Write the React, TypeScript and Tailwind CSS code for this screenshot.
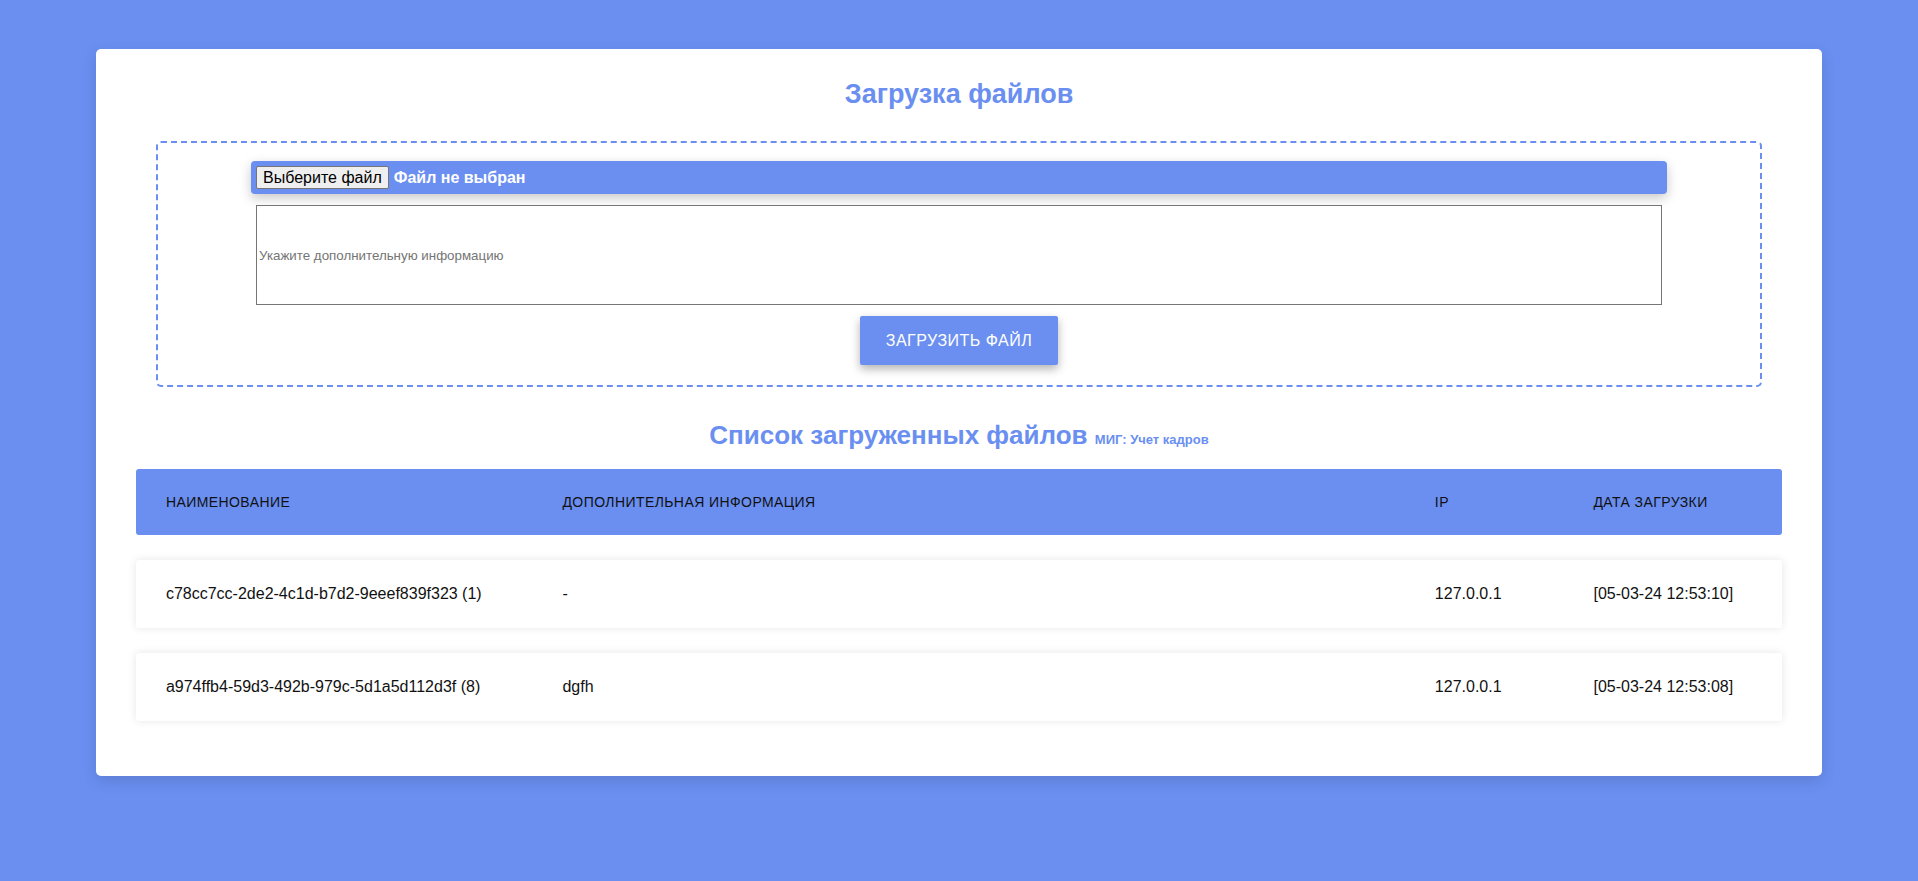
import React from "react";

const rows = [
  { name: "c78cc7cc-2de2-4c1d-b7d2-9eeef839f323 (1)", info: "-", ip: "127.0.0.1", date: "[05-03-24 12:53:10]" },
  { name: "a974ffb4-59d3-492b-979c-5d1a5d112d3f (8)", info: "dgfh", ip: "127.0.0.1", date: "[05-03-24 12:53:08]" },
];

export default function App() {
  return (
    <div className="min-h-screen bg-[#6a8ff1] pt-[49px] pb-10 font-['Liberation_Sans',Arial,sans-serif]">
      <div className="mx-auto w-[90%] rounded-[5px] bg-white px-10 pt-[30px] pb-[30px] shadow-[0_5px_15px_rgba(0,0,0,0.12)]">
        <h1 className="text-center text-[27px] font-bold leading-[31px] text-[#6a8ff1]">Загрузка файлов</h1>

        <div className="mx-5 mt-[31px] flex flex-col items-center gap-[11px] rounded-[5px] border-2 border-dashed border-[#6a8ff1] px-5 pt-[18px] pb-5">
          <div className="box-content flex w-[90%] items-center gap-[5px] rounded-[4px] bg-[#6a8ff1] p-[5px] shadow-[0_4px_12px_rgba(0,0,0,0.22)]">
            <span className="rounded-[2px] border border-[#767676] bg-[#efefef] px-[6px] py-[1px] text-base leading-[19px] text-black">
              Выберите файл
            </span>
            <span className="text-base font-bold leading-[19px] text-white">Файл не выбран</span>
          </div>
          <input
            type="text"
            placeholder="Укажите дополнительную информацию"
            className="block h-[100px] w-[90%] border border-[#767676] bg-white px-[2px] text-[13.33px] text-black outline-none placeholder:text-[#757575]"
          />
          <button className="h-[49px] rounded-[2px] bg-[#6a8ff1] px-[26px] text-base uppercase tracking-[0.5px] text-white shadow-[0_4px_10px_rgba(0,0,0,0.3)]">
            Загрузить файл
          </button>
        </div>

        <h2 className="mt-[33px] text-center text-[26px] font-bold leading-[30px] text-[#6a8ff1]">
          Список загруженных файлов <span className="text-[13px] leading-none">МИГ: Учет кадров</span>
        </h2>

        <ul className="mt-[19px]">
          <li className="mb-[25px] flex rounded-[3px] bg-[#6a8ff1] px-[30px] py-[25px] text-[14px] uppercase leading-[16px] tracking-[0.03em] text-[#111]">
            <div className="w-[25%] shrink-0">Наименование</div>
            <div className="w-[55%] shrink-0">Дополнительная информация</div>
            <div className="w-[10%] shrink-0">IP</div>
            <div className="w-[10%] shrink-0 whitespace-nowrap">Дата загрузки</div>
          </li>
          {rows.map((r) => (
            <li
              key={r.name}
              className="mb-[25px] flex rounded-[3px] bg-white px-[30px] py-[25px] text-base leading-[18px] text-[#111] shadow-[0_0_9px_0_rgba(0,0,0,0.1)]"
            >
              <div className="w-[25%] shrink-0">{r.name}</div>
              <div className="w-[55%] shrink-0">{r.info}</div>
              <div className="w-[10%] shrink-0">{r.ip}</div>
              <div className="w-[10%] shrink-0 whitespace-nowrap">{r.date}</div>
            </li>
          ))}
        </ul>
      </div>
    </div>
  );
}
